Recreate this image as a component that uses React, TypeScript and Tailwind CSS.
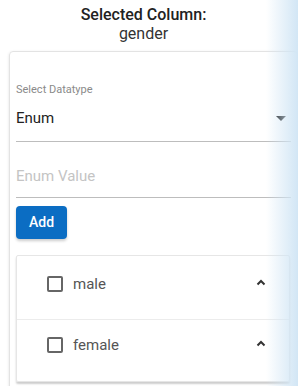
import React from 'react';

function ChevronUp() {
  return (
    <svg width="10" height="7" viewBox="0 0 10 7" className="block">
      <path d="M1.5 5.5 L5 2 L8.5 5.5" fill="none" stroke="#333" strokeWidth="2" />
    </svg>
  );
}

function EnumRow({ label, top, bottom, last }: { label: string; top: string; bottom: string; last?: boolean }) {
  return (
    <div className={`flex items-start pl-[30px] pr-[23px] ${top} ${bottom} ${last ? '' : 'border-b border-[#ececec]'}`}>
      <span className="w-[16px] h-[16px] border-2 border-[#666] rounded-[2px] shrink-0" />
      <span className="ml-[10px] text-[15px] leading-[16px] text-[#555]">{label}</span>
      <span className="ml-auto mt-[3px]">
        <ChevronUp />
      </span>
    </div>
  );
}

export default function App() {
  return (
    <div className="relative w-[298px] h-[386px] overflow-hidden bg-white font-['Roboto',sans-serif]">
      <div className="pt-[5px] pr-[11px] text-center">
        <div className="text-[16px] leading-[19px] font-medium text-[#222]">Selected Column:</div>
        <div className="text-[16px] leading-[19px] text-[#333]">gender</div>
      </div>

      <div className="mt-[8px] ml-[9px] w-[289px] border border-[#e3e3e3] rounded-[4px] shadow-[0_1px_3px_rgba(0,0,0,0.12)] px-[6px] pt-[31px] pb-[16px]">
        <div className="text-[11px] leading-[13px] text-[#8a8a8a]">Select Datatype</div>
        <div className="mt-[12px] h-[34px] flex items-start border-b border-[#bdbdbd]">
          <span className="text-[15px] leading-[20px] text-[#222]">Enum</span>
          <svg width="10" height="5" viewBox="0 0 10 5" className="ml-auto mr-[5px] mt-[8px]">
            <path d="M0 0 L10 0 L5 5 Z" fill="#111" />
          </svg>
        </div>
        <div className="h-[56px] pt-[22px] border-b border-[#bdbdbd]">
          <span className="text-[15px] leading-[20px] text-[#c4c4c4]">Enum Value</span>
        </div>
        <button className="mt-[8px] w-[51px] h-[33px] rounded-[4px] bg-[#0b6dc3] text-white text-[14px] font-medium shadow-[0_2px_3px_rgba(0,0,0,0.2)]">
          Add
        </button>
        <div className="mt-[16px] w-[274px] border border-[#e6e6e6] rounded-[2px] shadow-[0_2px_2px_rgba(0,0,0,0.2)]">
          <EnumRow label="male" top="pt-[20px]" bottom="pb-[27px]" />
          <EnumRow label="female" top="pt-[17px]" bottom="pb-[28px]" last />
        </div>
      </div>

      <div className="pointer-events-none absolute right-0 top-0 h-full w-[32px] bg-linear-to-r from-transparent to-[#d2e6f5]" />
    </div>
  );
}
